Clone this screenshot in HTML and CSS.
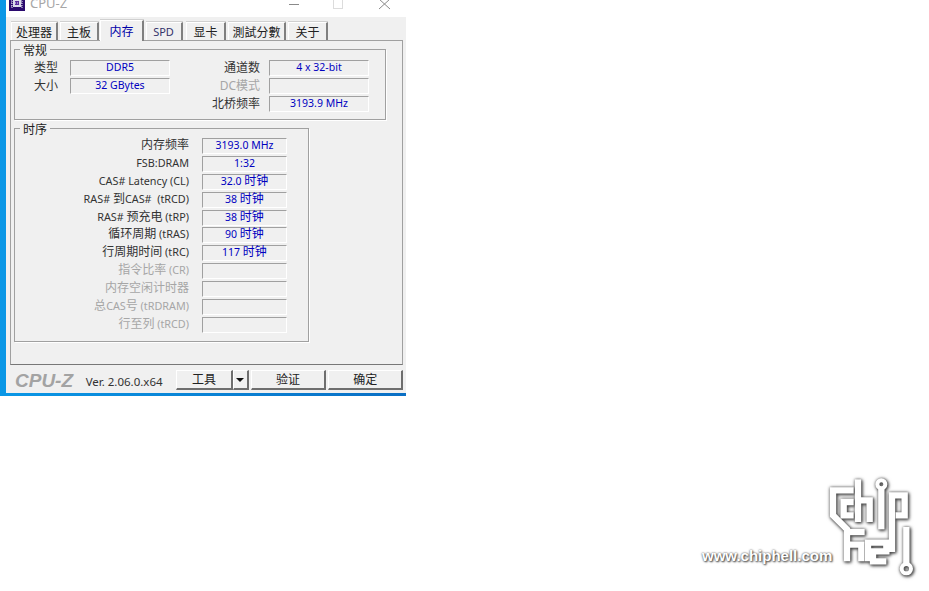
FILE: index.html
```html
<!DOCTYPE html>
<html lang="zh-CN">
<head>
    <meta charset="UTF-8">
    <title>CPU-Z</title>
    <link rel="stylesheet" href="styles.css">
</head>
<body>
    <div class="desktop">
        <div class="window">
            <div class="titlebar">
                <svg class="app-icon" width="16" height="16" viewBox="0 0 16 16">
                    <rect width="16" height="16" fill="#2b0a6e"/>
                    <rect x="4" y="4" width="8" height="8" fill="#d8d8e8"/>
                    <rect x="6" y="6" width="4" height="4" fill="#5b2a9e"/>
                    <path d="M3 2v12M13 2v12M2 5h12M2 8h12M2 11h12" stroke="#e8e8f0" stroke-width="1" stroke-dasharray="1 1" fill="none"/>
                </svg>
                <span class="app-name">CPU-Z</span>
                <div class="controls">
                    <svg class="ctl-min" width="10" height="17" viewBox="0 0 10 17"><path d="M0 9.5h10" stroke="#8a8a8a"/></svg>
                    <svg class="ctl-max" width="10" height="17" viewBox="0 0 10 17"><rect x="0.5" y="-2" width="9" height="15.5" fill="none" stroke="#dcdcdc"/></svg>
                    <svg class="ctl-close" width="11" height="17" viewBox="0 0 11 17"><path d="M0 4l11 10M11 4L0 14" stroke="#8a8a8a" fill="none"/></svg>
                </div>
            </div>
            <div class="client">
                <div class="tabs">
                    <div class="tab tab-cpu">处理器</div>
                    <div class="tab tab-board">主板</div>
                    <div class="tab tab-mem active">内存</div>
                    <div class="tab tab-spd">SPD</div>
                    <div class="tab tab-gpu">显卡</div>
                    <div class="tab tab-bench">測試分數</div>
                    <div class="tab tab-about">关于</div>
                </div>
                <div class="panel">
                    <div class="group group-general">
                        <div class="group-title">常规</div>
                        <div class="general-grid">
                            <div class="label">类型</div>
                            <div class="field">DDR5</div>
                            <div class="label label-right">通道数</div>
                            <div class="field">4 x 32-bit</div>
                            <div class="label">大小</div>
                            <div class="field">32 GBytes</div>
                            <div class="label label-right off"><span class="zh">DC模式</span></div>
                            <div class="field"></div>
                            <div></div>
                            <div></div>
                            <div class="label label-right">北桥频率</div>
                            <div class="field">3193.9 MHz</div>
                        </div>
                    </div>
                    <div class="group group-timing">
                        <div class="group-title">时序</div>
                        <div class="timing-grid">
                            <div class="label"><span class="zh">内存频率</span></div>
                            <div class="field">3193.0 MHz</div>
                            <div class="label">FSB:DRAM</div>
                            <div class="field">1:32</div>
                            <div class="label">CAS# Latency (CL)</div>
                            <div class="field">32.0 <span class="zh">时钟</span></div>
                            <div class="label">RAS# <span class="zh">到</span>CAS#&nbsp; (tRCD)</div>
                            <div class="field">38 <span class="zh">时钟</span></div>
                            <div class="label">RAS# <span class="zh">预充电</span> (tRP)</div>
                            <div class="field">38 <span class="zh">时钟</span></div>
                            <div class="label"><span class="zh">循环周期</span> (tRAS)</div>
                            <div class="field">90 <span class="zh">时钟</span></div>
                            <div class="label"><span class="zh">行周期时间</span> (tRC)</div>
                            <div class="field">117 <span class="zh">时钟</span></div>
                            <div class="label off"><span class="zh">指令比率</span> (CR)</div>
                            <div class="field"></div>
                            <div class="label off"><span class="zh">内存空闲计时器</span></div>
                            <div class="field"></div>
                            <div class="label off"><span class="zh">总</span>CAS<span class="zh">号</span> (tRDRAM)</div>
                            <div class="field"></div>
                            <div class="label off"><span class="zh">行至列</span> (tRCD)</div>
                            <div class="field"></div>
                        </div>
                    </div>
                </div>
                <div class="footer">
                    <span class="brand">CPU-Z</span>
                    <span class="version">Ver. 2.06.0.x64</span>
                    <button class="btn btn-tools">工具</button>
                    <button class="btn btn-arrow"><span class="arrow"></span></button>
                    <button class="btn btn-verify">验证</button>
                    <button class="btn btn-ok">确定</button>
                </div>
            </div>
        </div>
    </div>

    <div class="watermark">
        <span class="watermark-url">www.chiphell.com</span>
        <svg class="watermark-logo" width="95" height="110" viewBox="0 0 285 330">
            <g fill="none" stroke="#fff" stroke-width="19" stroke-linejoin="miter">
                <path d="M92 55H30V130L72 172V268"/>
                <path d="M92 90H62V130H92"/>
                <path d="M105 22V150"/>
                <path d="M105 85H140V150"/>
                <path d="M175 50V172"/>
                <circle cx="175" cy="37" r="12" stroke-width="12"/>
                <path d="M207 240V70H245V130H218"/>
                <path d="M72 180H125"/>
                <path d="M72 218H115V268"/>
                <path d="M135 268V212H190V238H150V268H190"/>
                <path d="M250 165V275"/>
                <circle cx="250" cy="290" r="14" stroke-width="12"/>
            </g>
        </svg>
    </div>
</body>
</html>
```

FILE: styles.css
```css
body {
    margin: 0;
    background: white;
    font-family: "Noto Sans", "Noto Sans CJK SC", sans-serif;
    font-size: 12px;
    color: #222;
}

.zh {
    font-size: 12px;
}

.desktop {
    width: 406px;
    height: 396px;
    box-sizing: border-box;
    padding: 0 0 3px 6px;
    background: linear-gradient(90deg, #0a97e6 0%, #0a6fc4 100%);
}

.window {
    height: 100%;
    display: flex;
    flex-direction: column;
    background: #f0f0f0;
}

/* title bar is cut off by the top of the screenshot */
.titlebar {
    height: 17px;
    flex: none;
    background: white;
    overflow: hidden;
    display: flex;
    align-items: flex-start;
    padding-left: 3px;
}

.app-icon {
    margin-top: -5px;
    flex: none;
}

.app-name {
    margin: -5px 0 0 5px;
    font-size: 13px;
    line-height: 17px;
    color: #a6a6a6;
}

.controls {
    display: flex;
    margin: -5px 0 0 222px;
}

.ctl-max {
    margin-left: 34px;
}

.ctl-close {
    margin-left: 36px;
}

.client {
    flex: 1;
    display: flex;
    flex-direction: column;
    padding-left: 4px;
    padding-right: 3px;
}

.tabs {
    height: 23px;
    flex: none;
    display: flex;
    align-items: flex-end;
    padding-left: 1px;
    position: relative;
    z-index: 1;
}

.tab {
    height: 18px;
    box-sizing: border-box;
    margin-right: 2px;
    background: #f0f0f0;
    border-top: 1px solid #fff;
    border-left: 1px solid #fff;
    border-right: 2px solid #808080;
    text-align: center;
    line-height: 20px;
    box-shadow: 0 -1px 0 #d0d0d0;
}

.tab.active {
    height: 21px;
    margin-bottom: -1px;
    color: #0000a8;
    line-height: 22px;
}

.tab-cpu { width: 47px; }
.tab-board { width: 39px; margin-right: 1px; }
.tab-mem { width: 44px; }
.tab-spd { width: 37px; margin-right: 3px; padding-right: 1px; color: #33336b; font-size: 11px; line-height: 18px; }
.tab-gpu { width: 40px; }
.tab-bench { width: 58px; }
.tab-about { width: 40px; }

.panel {
    height: 325px;
    flex: none;
    box-sizing: border-box;
    border: 1px solid #a0a0a0;
    border-bottom-color: #777;
    padding: 8px 0 0 3px;
}

.group {
    box-sizing: border-box;
    border: 1px solid #a0a0a0;
    box-shadow: 1px 1px 0 #fff;
}

.group-general {
    width: 372px;
    height: 71px;
}

.group-timing {
    width: 295px;
    height: 214px;
    margin-top: 8px;
}

.group-title {
    display: table;
    margin: -6px 0 0 5px;
    padding: 0 3px;
    height: 12px;
    line-height: 13px;
    background: #f0f0f0;
}

.general-grid {
    display: grid;
    grid-template-columns: 55px 100px 99px 100px;
    grid-auto-rows: 16px;
    row-gap: 2px;
    margin-top: 3px;
}

.general-grid .label {
    padding-right: 12px;
    line-height: 16px;
}

.general-grid .label-right {
    padding-right: 9px;
}

.timing-grid {
    display: grid;
    grid-template-columns: 174px 85px;
    grid-auto-rows: 16px;
    column-gap: 13px;
    row-gap: 1.9px;
    margin-top: 2px;
}

.label {
    text-align: right;
    line-height: 17px;
    white-space: nowrap;
    font-size: 12px;
    color: #333;
}

.timing-grid .label {
    font-size: 10.8px;
    line-height: 14px;
}

.label.off {
    color: #a6a6a6;
}

.field {
    box-sizing: border-box;
    border-top: 1px solid #a0a0a0;
    border-left: 1px solid #a0a0a0;
    border-right: 1px solid #fff;
    border-bottom: 1px solid #fff;
    text-align: center;
    line-height: 12px;
    font-size: 10.5px;
    color: #0000c0;
}

.footer {
    flex: 1;
    display: flex;
    align-items: flex-start;
    padding: 5px 0 0 5px;
}

.brand {
    width: 71px;
    font-family: "Liberation Sans", sans-serif;
    font-size: 19px;
    font-weight: bold;
    font-style: italic;
    line-height: 22px;
    color: #a3a3a3;
}

.version {
    width: 91px;
    font-size: 11.5px;
    line-height: 24px;
    color: #333;
}

.btn {
    height: 20px;
    box-sizing: border-box;
    padding: 0;
    margin: 0;
    background: #f0f0f0;
    border-style: solid;
    border-width: 1px 2px 2px 1px;
    border-color: #fff #6e6e6e #6e6e6e #fff;
    font: inherit;
    color: #222;
    line-height: 16px;
}

.btn-tools { width: 57px; }
.btn-arrow { width: 16px; margin-right: 2px; }
.btn-verify { width: 76px; margin-right: 2px; }
.btn-ok { width: 75px; }

.arrow {
    display: block;
    width: 0;
    margin: 1px auto 0;
    border-left: 4px solid transparent;
    border-right: 4px solid transparent;
    border-top: 4px solid #111;
}

.watermark {
    position: absolute;
    left: 702px;
    top: 472px;
    display: flex;
    align-items: flex-start;
}

.watermark-url {
    margin-top: 75px;
    font-family: "Liberation Sans", sans-serif;
    font-size: 15px;
    font-weight: bold;
    line-height: 18px;
    color: #fff;
    text-shadow: 0 0 2px #444, 1px 1px 2px #444;
    white-space: nowrap;
    width: 121px;
}

.watermark-logo {
    filter: drop-shadow(1px 1px 1.5px #444) drop-shadow(0 0 1.5px #777);
}
```
